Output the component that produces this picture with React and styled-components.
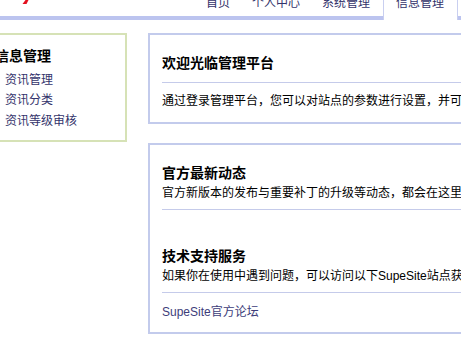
import styled, { createGlobalStyle } from 'styled-components'

const GlobalStyle = createGlobalStyle`
  *, *::before, *::after {
    box-sizing: border-box;
  }
  html, body {
    margin: 0;
    padding: 0;
    background: #fff;
    overflow: hidden;
  }
  body {
    font-family: "Liberation Sans", "Noto Sans CJK SC", sans-serif;
    font-size: 12px;
    color: #000;
  }
`

const tabs = ['首页', '个人中心', '系统管理', '信息管理']
const menu = ['资讯管理', '资讯分类', '资讯等级审核']

function App() {
  return (
    <>
      <GlobalStyle />
      <Header>
        <Logo width="8" height="13" viewBox="0 0 8 13">
          <polygon points="3.5,9 6.5,9 4.5,13 0.5,13" fill="#e3101e" />
        </Logo>
        <Tabs>
          {tabs.map((t, i) => (
            <Tab key={t} active={i === tabs.length - 1}>
              {t}
            </Tab>
          ))}
        </Tabs>
      </Header>

      <Main>
        <Sidebar>
          <SideTitle>信息管理</SideTitle>
          <SideList>
            {menu.map((m) => (
              <SideItem key={m}>{m}</SideItem>
            ))}
          </SideList>
        </Sidebar>

        <Content>
          <Panel>
            <PanelTitle divided>欢迎光临管理平台</PanelTitle>
            <Intro>通过登录管理平台，您可以对站点的参数进行设置，并可以管理站点的各项资讯内容。</Intro>
          </Panel>

          <Panel>
            <Section>
              <PanelTitle>官方最新动态</PanelTitle>
              <Text>官方新版本的发布与重要补丁的升级等动态，都会在这里显示。</Text>
            </Section>
            <Section spaced>
              <PanelTitle>技术支持服务</PanelTitle>
              <Text>如果你在使用中遇到问题，可以访问以下SupeSite站点获取帮助。</Text>
            </Section>
            <LinkRow>
              <Link href="#">SupeSite官方论坛</Link>
            </LinkRow>
          </Panel>
        </Content>
      </Main>
    </>
  )
}

export default App

/* ===== styles ===== */

const Header = styled.div`
  display: flex;
  align-items: flex-start;
  justify-content: space-between;
  margin-top: -9px;
  height: 29px;
  border-bottom: 4px solid #bcc4ef;
  padding-right: 3px;
`

const Logo = styled.svg`
  display: block;
  margin-left: 22px;
`

const Tabs = styled.ul`
  display: flex;
  list-style: none;
  margin: 0;
  padding: 0;
`

const Tab = styled.li`
  line-height: 25px;
  height: ${({ active }) => (active ? '29px' : '25px')};
  padding: ${({ active }) => (active ? '0 13px 0 12px' : '0 11px')};
  margin-left: ${({ active }) => (active ? '2px' : '0')};
  color: #33336b;
  font-size: 12px;
  background: #fff;
  border-left: ${({ active }) => (active ? '1px solid #c9cff0' : 'none')};
  border-right: ${({ active }) => (active ? '1px solid #c9cff0' : 'none')};
`

const Main = styled.div`
  display: flex;
  align-items: flex-start;
  gap: 21px;
  margin-left: -14px;
  margin-top: 13px;
`

const Sidebar = styled.div`
  flex: none;
  width: 141px;
  border: 2px solid #d6e2b6;
  padding: 10.5px 0 9px 7px;
`

const SideTitle = styled.h3`
  margin: 0;
  font-size: 14px;
  line-height: 20px;
  font-weight: bold;
  color: #000;
`

const SideList = styled.ul`
  list-style: none;
  margin: 4px 0 0;
  padding: 0 0 0 10px;
`

const SideItem = styled.li`
  line-height: 20.5px;
  color: #33336b;
  white-space: nowrap;
`

const Content = styled.div`
  display: flex;
  flex-direction: column;
  gap: 19px;
  flex: none;
  width: 420px;
`

const Panel = styled.div`
  border: 2px solid #c3cbec;
  padding: 18px 0 10px 12px;
`

const Section = styled.div`
  padding-bottom: 6px;
  border-bottom: 1px solid #c5cbea;
  margin-top: ${({ spaced }) => (spaced ? '36px' : '0')};
`

const PanelTitle = styled.h4`
  margin: 0;
  font-size: 14px;
  line-height: 20px;
  font-weight: bold;
  white-space: nowrap;
  padding-bottom: ${({ divided }) => (divided ? '9px' : '0')};
  border-bottom: ${({ divided }) => (divided ? '1px solid #c5cbea' : 'none')};
`

const Text = styled.p`
  margin: 0;
  line-height: 20px;
  white-space: nowrap;
`

const Intro = styled(Text)`
  margin-top: 7.5px;
  padding-bottom: 1.5px;
`

const LinkRow = styled.div`
  margin-top: 9px;
  line-height: 20px;
`

const Link = styled.a`
  color: #3d3d7a;
  text-decoration: none;
`
